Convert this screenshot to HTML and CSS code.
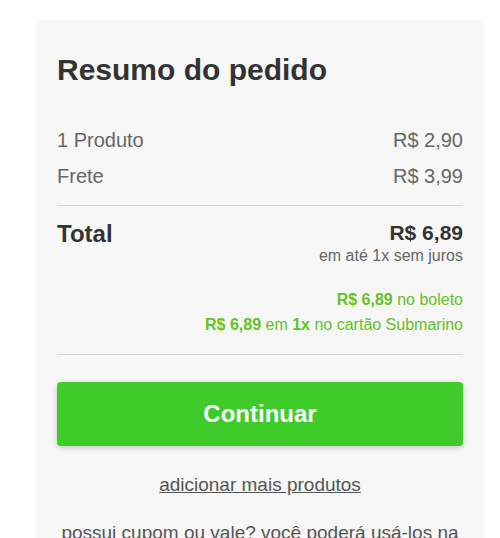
FILE: index.html
```html
<!DOCTYPE html>
<html lang="pt-BR">
  <head>
    <meta charset="UTF-8" />
    <meta name="viewport" content="width=device-width, initial-scale=1.0" />
    <title>Resumo do pedido</title>
    <link rel="stylesheet" href="styles.css">
  </head>
  <body>
    <div class="summary">
      <h2 class="title">Resumo do pedido</h2>
      <div class="rows">
        <div class="row"><span>1 Produto</span><span>R$ 2,90</span></div>
        <div class="row"><span>Frete</span><span>R$ 3,99</span></div>
      </div>
      <div class="total">
        <span class="total-label">Total</span>
        <div class="total-values">
          <span class="total-price">R$ 6,89</span>
          <span class="installments">em até 1x sem juros</span>
        </div>
      </div>
      <div class="offers">
        <p><b>R$ 6,89</b> no boleto</p>
        <p><b>R$ 6,89</b> em <b>1x</b> no cartão Submarino</p>
      </div>
      <button class="continue">Continuar</button>
      <a class="more" href="#">adicionar mais produtos</a>
      <p class="coupon">possui cupom ou vale? você poderá usá-los na etapa de pagamento</p>
    </div>
  </body>
</html>
```

FILE: styles.css
```css
body {
  margin: 0;
  background: #fff;
  font-family: "Liberation Sans", Arial, sans-serif;
  overflow: hidden;
}
.summary {
  margin: 20px 16px 0 36px;
  padding: 32px 21px 20px;
  background-color: #f7f7f7;
  border-radius: 8px;
}
.title {
  margin: 0;
  font-size: 30px;
  line-height: 36px;
  font-weight: bold;
  color: #333;
}
.rows {
  margin-top: 34px;
  padding-bottom: 11px;
  border-bottom: 1px solid #d6d6d6;
}
.row {
  display: flex;
  justify-content: space-between;
  font-size: 20px;
  line-height: 36px;
  color: #666;
}
.total {
  display: flex;
  justify-content: space-between;
  padding-top: 14px;
}
.total-label {
  font-size: 24px;
  font-weight: bold;
  color: #333;
  line-height: 28px;
}
.total-values {
  display: flex;
  flex-direction: column;
  align-items: flex-end;
}
.total-price {
  font-size: 21px;
  font-weight: bold;
  color: #333;
  line-height: 26px;
}
.installments {
  font-size: 16px;
  color: #666;
  line-height: 20px;
}
.offers {
  margin-top: 21px;
  padding-bottom: 17px;
  border-bottom: 1px solid #d6d6d6;
  text-align: right;
  color: #62c322;
  font-size: 16px;
}
.offers p {
  margin: 0;
  line-height: 25px;
}
.continue {
  display: block;
  width: 100%;
  height: 64px;
  margin-top: 27px;
  border: none;
  border-radius: 4px;
  background-color: #3fcc2a;
  color: #fff;
  font-family: inherit;
  font-size: 24px;
  font-weight: bold;
  box-shadow: 0 2px 6px rgba(0, 0, 0, 0.2);
  cursor: pointer;
}
.more {
  display: block;
  margin-top: 28px;
  text-align: center;
  font-size: 19px;
  color: #555;
  line-height: 22px;
}
.coupon {
  margin: 25px 0 0;
  text-align: center;
  font-size: 19px;
  color: #555;
  line-height: 24px;
}
```
